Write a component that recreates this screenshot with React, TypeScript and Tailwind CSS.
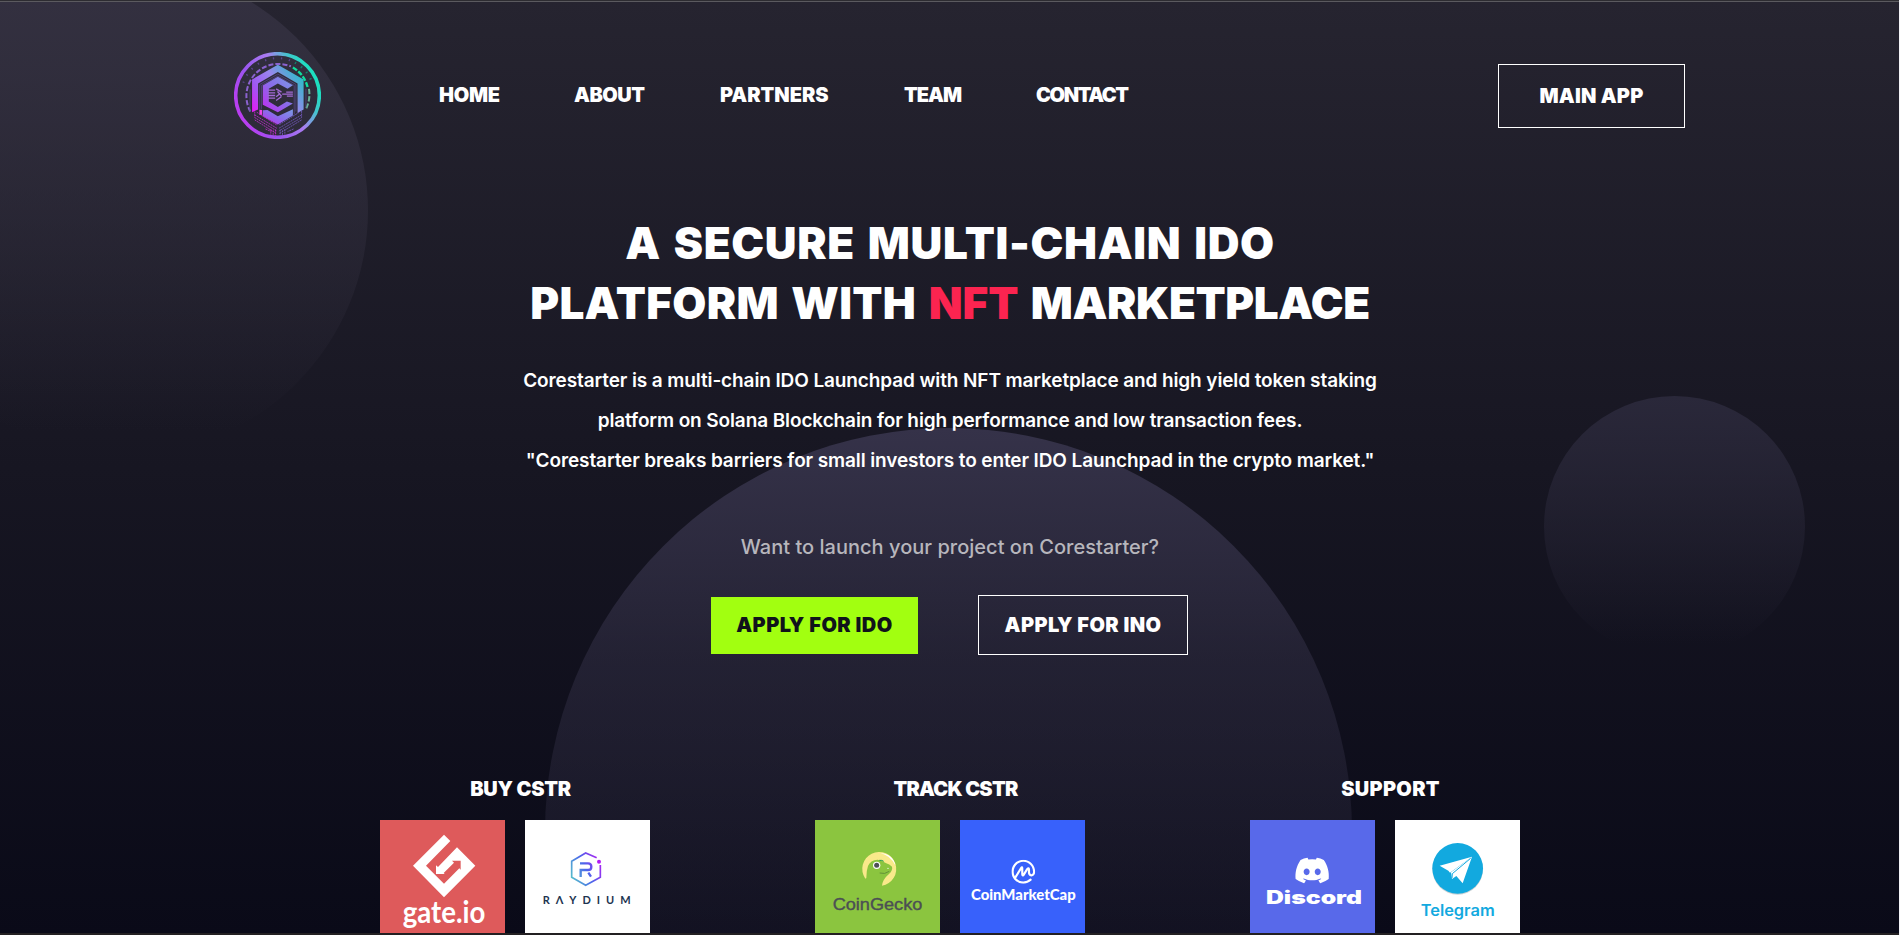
import React from "react";
import { FaDiscord } from "react-icons/fa";
import { SiCoinmarketcap } from "react-icons/si";

const DISPLAY = "font-['Inter',sans-serif] font-[900]";

function Logo() {
  return (
    <svg viewBox="0 0 260 260" className="h-[87px] w-[87px] shrink-0" fill="none">
      <defs>
        <linearGradient id="ring" gradientUnits="userSpaceOnUse" x1="20" y1="190" x2="240" y2="80">
          <stop offset="0" stopColor="#b93df0" />
          <stop offset=".3" stopColor="#9a56f0" />
          <stop offset=".62" stopColor="#a97cf0" />
          <stop offset=".85" stopColor="#3fc8cc" />
          <stop offset="1" stopColor="#1ddfc0" />
        </linearGradient>
        <linearGradient id="hex" gradientUnits="userSpaceOnUse" x1="50" y1="180" x2="205" y2="70">
          <stop offset="0" stopColor="#f012f5" />
          <stop offset=".3" stopColor="#9e58f2" />
          <stop offset=".6" stopColor="#9a86ee" />
          <stop offset="1" stopColor="#25bfc6" />
        </linearGradient>
        <linearGradient id="core" x1="0" y1="1" x2="1" y2="0">
          <stop offset="0" stopColor="#c428f0" />
          <stop offset=".5" stopColor="#8a6bea" />
          <stop offset="1" stopColor="#7a9ae4" />
        </linearGradient>
      </defs>
      <circle cx="130" cy="130" r="125" stroke="url(#ring)" strokeWidth="10.5" />
      <path d="M49 178A96 96 0 0 1 170 43" stroke="#8a62cf" strokeWidth="6" strokeDasharray="15 6" />
      <path d="M176 46A96 96 0 0 1 220 105" stroke="#0fdc9c" strokeWidth="7" strokeDasharray="15 5" />
      <path d="M224 110A96 96 0 0 1 216 168" stroke="#68b397" strokeWidth="6" strokeDasharray="16 6" />
      <path d="M28 92A108 108 0 0 1 170 26" stroke="#5c4490" strokeWidth="6" strokeDasharray="4 20" />
      <path d="M182 32A108 108 0 0 1 235 96" stroke="#167f6e" strokeWidth="7" strokeDasharray="4 18" />
      <path d="M54 180V82L131 38L208 82V172L190 182V94L131 60L72 94V172Z" fill="url(#hex)" />
      <g stroke="#514681" strokeWidth="2.5">
        <path d="M77 175V97L131 66L185 97V178" />
        <path d="M82 170V100L131 72L180 100V186" />
        <path d="M48 178V112M215 110V166" />
      </g>
      <path d="M86 158V100L131 74L176 99L160 110L131 94L104 110V148L131 164L158 148L176 154L131 180Z" fill="url(#core)" />
      <path d="M86 174L100 173L131 192L176 171V190L131 217L86 192Z" fill="url(#core)" />
      <path d="M76 173h8v15h-8z" fill="#ee45e8" />
      <g stroke="#a26bd5" strokeWidth="4">
        <path d="M101 114h22M101 122h22M101 130h22M101 138h22M126 110l16 10M126 145l16-12M130 118l12 14M126 134l12-10" />
        <path d="M144 126h32M156 120h20M158 132h18" />
      </g>
      <g stroke="#bd2fc9" strokeWidth="2.5" strokeDasharray="6 2">
        <path d="M62 178V196L128 236M62 188L128 228M68 180L128 218M62 203L126 243M94 230l18 8M110 230v18M117 234v16M124 232v20" />
      </g>
      <g stroke="#7459bf" strokeWidth="2.5" strokeDasharray="6 2">
        <path d="M202 176V196L134 236M202 188L134 228M195 180L134 218M202 203L136 243M178 230l-18 8M152 230v18M145 234v16M138 232v20" />
      </g>
    </svg>
  );
}

function GateIo() {
  return (
    <svg viewBox="0 0 375 339" className="h-[113px] w-[125px] bg-[#de5a5b]">
      <path
        fill="#fff"
        transform="translate(84 30)"
        d="M108 14L127 33L54 107L108 161L154 115L158 119V92H132L138 98L107 129L110 132H84V106L90 111L147 52L202 107L108 202L15 107Z"
      />
      <text x="68" y="308" textLength="248" lengthAdjust="spacingAndGlyphs" fontFamily="Lato, sans-serif" fontWeight="700" fontSize="90" fill="#fff">gate.io</text>
    </svg>
  );
}

function Raydium() {
  return (
    <svg viewBox="0 0 375 339" className="h-[113px] w-[125px] bg-white" fill="none">
      <defs>
        <linearGradient id="ray" gradientUnits="userSpaceOnUse" x1="135" y1="170" x2="230" y2="125">
          <stop offset="0" stopColor="#55c1cb" />
          <stop offset=".5" stopColor="#4b66ea" />
          <stop offset="1" stopColor="#b01ff2" />
        </linearGradient>
      </defs>
      <path d="M215 113L182 99L140 124V172L182 196L226 172V135" stroke="url(#ray)" strokeWidth="5" />
      <circle cx="222" cy="125" r="6" fill="#b51af5" />
      <path d="M165 130H189Q199 130 199 140Q199 150 189 150H167V171M190 158L198 170" stroke="url(#ray)" strokeWidth="7" />
      <text x="53" y="252" textLength="264" fontFamily="Lato, sans-serif" fontWeight="700" fontSize="33" fill="#1d3450">RΛYDIUM</text>
    </svg>
  );
}

function CoinGecko() {
  return (
    <svg viewBox="0 0 375 339" className="h-[113px] w-[125px] bg-[#8bc53f]">
      <path fill="#f9e98a" d="M151 176A51 51 0 1 1 201 197Q203 178 222 162Q234 150 231 140Q224 132 212 129Q202 121 188 119Q166 120 159 138Q154 152 154 174Z" />
      <path fill="#fff" d="M196 99Q235 103 241 136Q226 106 196 99Z" />
      <path stroke="#1c9a51" strokeWidth="3" fill="none" d="M193 121q8-1 13 3" />
      <path stroke="#5b8736" strokeWidth="2.5" fill="none" d="M194 159q15 5 29-5" />
      <circle cx="185" cy="136" r="11" fill="#fff" />
      <circle cx="185" cy="136" r="7.5" fill="#4d5057" />
      <circle cx="219" cy="145" r="2" fill="#fff" />
      <text x="53" y="270" textLength="269" lengthAdjust="spacingAndGlyphs" fontFamily="Liberation Sans, sans-serif" fontSize="52" stroke="#4b4f54" strokeWidth="1.2" fill="#4b4f54">CoinGecko</text>
    </svg>
  );
}

function CoinMarketCap() {
  return (
    <svg viewBox="0 0 375 339" className="h-[113px] w-[125px] bg-[#3861fb]">
      <SiCoinmarketcap x={154} y={119} size={72} color="#fff" />
      <text x="33" y="239" textLength="314" lengthAdjust="spacingAndGlyphs" fontFamily="Lato, sans-serif" fontWeight="900" fontSize="44" fill="#fff">CoinMarketCap</text>
    </svg>
  );
}

function Discord() {
  return (
    <svg viewBox="0 0 375 339" className="h-[113px] w-[125px] bg-[#5869ea]">
      <FaDiscord x={132} y={97} size={109} color="#fff" />
      <text x="48" y="251" textLength="288" lengthAdjust="spacingAndGlyphs" fontFamily="Inter, sans-serif" fontWeight="900" fontSize="55" fill="#fff">Discord</text>
    </svg>
  );
}

function Telegram() {
  return (
    <svg viewBox="0 0 375 339" className="h-[113px] w-[125px] bg-white">
      <circle cx="188" cy="148" r="76" fill="#9aa5aa" opacity=".5" />
      <circle cx="188" cy="145" r="76" fill="#12a9df" />
      <path fill="#fff" d="M134 137L231 110L165 158L160 152Z" />
      <path fill="#fff" d="M231 110L203 190L184 168L171 177L168 157Z" />
      <path stroke="#12a9df" strokeWidth="3" fill="none" d="M227 115L172 161L171 174" />
      <text x="77" y="288" textLength="222" lengthAdjust="spacingAndGlyphs" fontFamily="Inter, sans-serif" fontWeight="600" fontSize="46" fill="#12a9df">Telegram</text>
    </svg>
  );
}

function Group({ title, tracking, children }: { title: string; tracking: string; children: React.ReactNode }) {
  return (
    <section className="flex w-[270px] flex-col">
      <h2 className={`${DISPLAY} ml-[11px] flex h-[62px] items-center justify-center text-[20px] leading-[20px] whitespace-nowrap text-white ${tracking}`}>{title}</h2>
      <div className="flex gap-5">{children}</div>
    </section>
  );
}

export default function App() {
  return (
    <div className="relative h-[935px] w-[1900px] overflow-hidden bg-linear-to-b from-[#262430] via-[#171622] to-[#0a0a18]">
      <div className="absolute -top-[34px] -left-[121px] size-[489px] rounded-full bg-linear-to-b from-[#343141] to-transparent to-95%" />
      <div className="absolute top-[428px] left-[545px] size-[807px] rounded-full bg-linear-to-b from-[#353249] via-[#353249]/50 via-28% to-[#353249]/0 to-85%" />
      <div className="absolute top-[396px] left-[1544px] size-[261px] rounded-full bg-linear-to-b from-[#2a283a] to-transparent to-95%" />
      <div className="absolute inset-x-0 top-0 h-[2px] border-b border-[#5b5a5f] bg-[#2d2c31]" />

      <div className="relative flex h-[933px] flex-col overflow-hidden">
        <header className="flex h-[190px] items-center pr-[215px] pl-[234px]">
          <Logo />
          <nav className={`${DISPLAY} ml-[118px] flex grow text-[20px] leading-[24px] whitespace-nowrap text-white`}>
            <a className="w-[135px] tracking-[-0.3px]">HOME</a>
            <a className="w-[146px] tracking-[-0.5px]">ABOUT</a>
            <a className="w-[184px]">PARTNERS</a>
            <a className="w-[132px] tracking-[-1px]">TEAM</a>
            <a className="tracking-[-1.4px]">CONTACT</a>
          </nav>
          <button className={`${DISPLAY} mt-[2px] h-[64px] w-[187px] border border-white text-[20px] tracking-[0.2px] text-white`}>MAIN APP</button>
        </header>

        <main className="flex flex-col items-center">
          <h1 className={`${DISPLAY} mt-[23px] text-center text-[44px] leading-[60px] whitespace-nowrap text-white [word-spacing:3.5px]`}>
            <span className="tracking-[0.65px]">A SECURE MULTI-CHAIN IDO</span>
            <br />
            <span className="tracking-[0.3px]">PLATFORM WITH </span>
            <span className="text-[#fb2450]">NFT </span>
            <span className="tracking-[-0.4px]">MARKETPLACE</span>
          </h1>
          <p className="mt-[28px] text-center font-['Inter',sans-serif] text-[19px] leading-[40px] font-semibold tracking-[-0.11px] whitespace-nowrap text-white">
            <span>Corestarter is a multi-chain IDO Launchpad with NFT marketplace and high yield token staking</span>
            <br />
            <span>platform on Solana Blockchain for high performance and low transaction fees.</span>
            <br />
            <span>"Corestarter breaks barriers for small investors to enter IDO Launchpad in the crypto market."</span>
          </p>
          <p className="mt-[46px] font-['Inter',sans-serif] text-[20px] leading-[40px] font-medium tracking-[0.02px] text-[#b7b6bc]">
            Want to launch your project on Corestarter?
          </p>
          <div className="mt-[28px] flex h-[60px] items-center gap-[60px] pr-px">
            <button className={`${DISPLAY} h-[57px] w-[207px] bg-[#a2ff10] text-[20px] tracking-[0.45px] whitespace-nowrap text-[#10131a]`}>APPLY FOR IDO</button>
            <button className={`${DISPLAY} h-[60px] w-[210px] border border-white text-[20px] tracking-[0.4px] whitespace-nowrap text-white`}>APPLY FOR INO</button>
          </div>
        </main>

        <div className="mt-[103px] flex justify-center gap-[165px]">
          <Group title="BUY CSTR" tracking="tracking-[-0.25px]">
            <GateIo />
            <Raydium />
          </Group>
          <Group title="TRACK CSTR" tracking="tracking-[-0.75px]">
            <CoinGecko />
            <CoinMarketCap />
          </Group>
          <Group title="SUPPORT" tracking="tracking-[0.3px]">
            <Discord />
            <Telegram />
          </Group>
        </div>
      </div>
      <div className="relative h-[2px] bg-[#232022]" />
      <div className="absolute inset-y-0 right-0 w-px bg-[#f4f4f8]" />
    </div>
  );
}
